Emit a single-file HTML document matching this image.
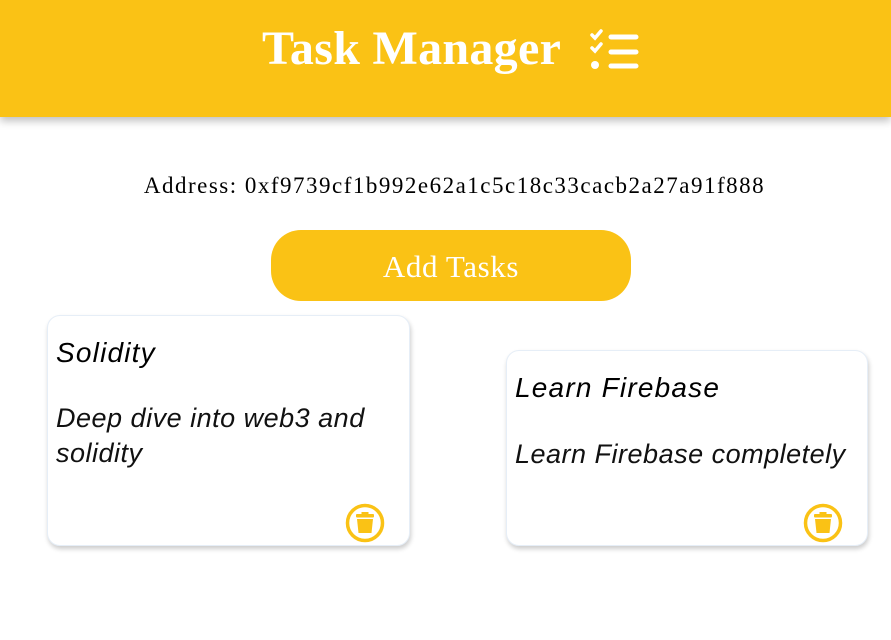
<!DOCTYPE html>
<html><head><style>
body{margin:0;width:891px;height:640px;background:#fff;position:relative;overflow:hidden;font-family:"Liberation Serif",serif}
.hdr{position:absolute;left:0;top:0;width:891px;height:117px;background:#FAC215;box-shadow:0 4px 8px rgba(0,0,0,.25)}
.hdr h1{position:absolute;left:262px;top:21px;margin:0;font-size:48px;font-weight:bold;color:#fff;letter-spacing:0.3px}
.addr{position:absolute;top:173px;left:9px;width:891px;text-align:center;font-size:23px;letter-spacing:1.5px;color:#000}
.btn{position:absolute;left:271px;top:230px;width:360px;height:71px;border-radius:30px;background:#FAC215;color:#fff;font-size:31px;letter-spacing:0.6px;text-align:center;line-height:73px}
.card{position:absolute;background:#fff;border-radius:13px;box-shadow:1px 3px 5px rgba(0,0,0,.2);border:1px solid #e6eef7;font-family:"Liberation Sans",sans-serif;font-style:italic}
.card .t{position:absolute;left:8px;font-size:28px;letter-spacing:1.2px;color:#000}
.card .d{position:absolute;left:8px;font-size:27px;line-height:35px;letter-spacing:0.5px;color:#111;font-weight:300}
.trash{position:absolute;width:40px;height:40px}
</style></head><body>
<div class="hdr"><h1>Task Manager</h1>
<svg style="position:absolute;left:588px;top:28px" width="52" height="44" viewBox="0 0 52 44" fill="none" stroke="#fff" stroke-linecap="round" stroke-width="5">
<path d="M4 7l3 3 6-7" stroke-width="3.5"/><path d="M4 20l3 3 6-7" stroke-width="3.5"/>
<circle cx="7" cy="37" r="4" fill="#fff" stroke="none"/>
<path d="M23 9h25M23 24h25M23 38h25"/></svg></div>
<div class="addr">Address: 0xf9739cf1b992e62a1c5c18c33cacb2a27a91f888</div>
<div class="btn">Add Tasks</div>
<div class="card" style="left:47px;top:315px;width:361px;height:229px">
<div class="t" style="top:21px">Solidity</div>
<div class="d" style="top:85px">Deep dive into web3 and<br>solidity</div>
<svg class="trash" style="left:297px;top:187px" viewBox="0 0 40 40"><circle cx="20" cy="20" r="17.5" fill="none" stroke="#FAC215" stroke-width="3.5"/><rect x="11" y="11" width="18" height="3.5" rx="1" fill="#FAC215"/><rect x="16.5" y="9" width="7" height="3" fill="#FAC215"/><path d="M12 16h16l-1.5 14h-13z" fill="#FAC215"/></svg>
</div>
<div class="card" style="left:506px;top:350px;width:360px;height:194px">
<div class="t" style="top:21px">Learn Firebase</div>
<div class="d" style="top:86px">Learn Firebase completely</div>
<svg class="trash" style="left:296px;top:152px" viewBox="0 0 40 40"><circle cx="20" cy="20" r="17.5" fill="none" stroke="#FAC215" stroke-width="3.5"/><rect x="11" y="11" width="18" height="3.5" rx="1" fill="#FAC215"/><rect x="16.5" y="9" width="7" height="3" fill="#FAC215"/><path d="M12 16h16l-1.5 14h-13z" fill="#FAC215"/></svg>
</div>
</body></html>
